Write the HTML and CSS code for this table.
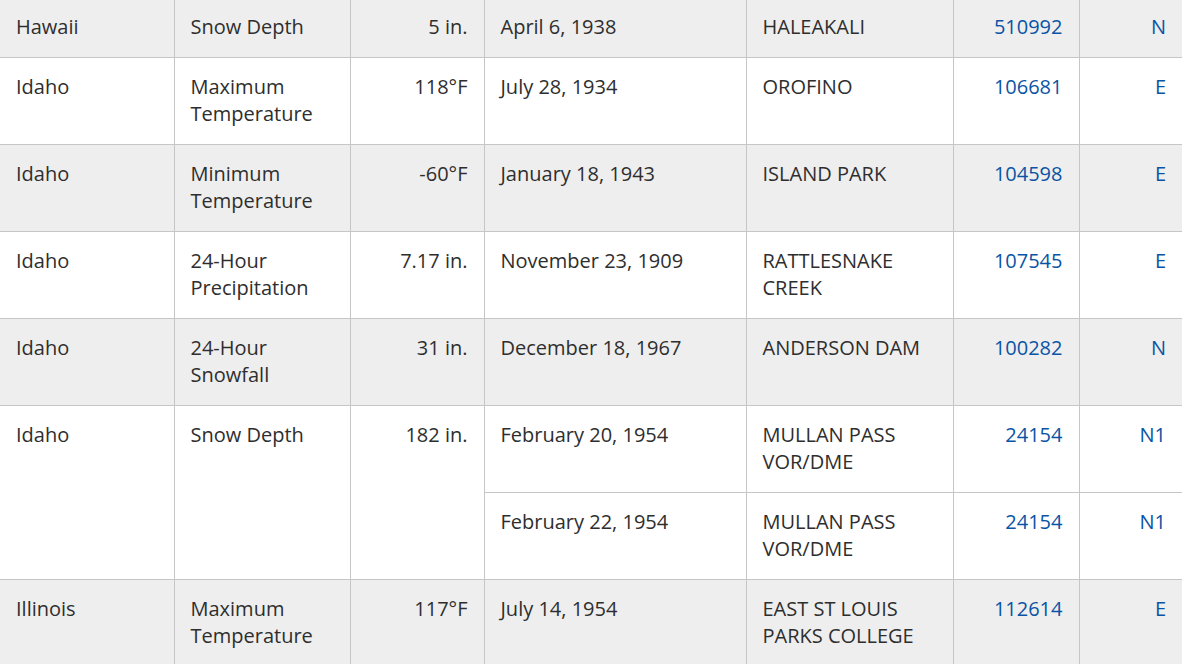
FILE: index.html
```html
<!DOCTYPE html>
<html>
<head>
<meta charset="utf-8">
<link rel="stylesheet" href="styles.css">
</head>
<body>
<div class="wrap">
<table class="records">
  <colgroup>
    <col class="c-state"><col class="c-elem"><col class="c-val"><col class="c-date"><col class="c-stn"><col class="c-id"><col class="c-flag">
  </colgroup>
  <tbody>
    <tr class="alt">
      <td>Hawaii</td><td>Snow Depth</td><td class="num">5 in.</td><td>April 6, 1938</td><td>HALEAKALI</td><td class="num"><a href="#">510992</a></td><td class="num"><a href="#">N</a></td>
    </tr>
    <tr>
      <td>Idaho</td><td>Maximum Temperature</td><td class="num">118°F</td><td>July 28, 1934</td><td>OROFINO</td><td class="num"><a href="#">106681</a></td><td class="num"><a href="#">E</a></td>
    </tr>
    <tr class="alt">
      <td>Idaho</td><td>Minimum Temperature</td><td class="num">-60°F</td><td>January 18, 1943</td><td>ISLAND PARK</td><td class="num"><a href="#">104598</a></td><td class="num"><a href="#">E</a></td>
    </tr>
    <tr>
      <td>Idaho</td><td>24-Hour Precipitation</td><td class="num">7.17 in.</td><td>November 23, 1909</td><td>RATTLESNAKE CREEK</td><td class="num"><a href="#">107545</a></td><td class="num"><a href="#">E</a></td>
    </tr>
    <tr class="alt">
      <td>Idaho</td><td>24-Hour Snowfall</td><td class="num">31 in.</td><td>December 18, 1967</td><td>ANDERSON DAM</td><td class="num"><a href="#">100282</a></td><td class="num"><a href="#">N</a></td>
    </tr>
    <tr>
      <td rowspan="2">Idaho</td><td rowspan="2">Snow Depth</td><td rowspan="2" class="num">182 in.</td><td>February 20, 1954</td><td>MULLAN PASS VOR/DME</td><td class="num"><a href="#">24154</a></td><td class="num"><a href="#">N1</a></td>
    </tr>
    <tr>
      <td>February 22, 1954</td><td>MULLAN PASS VOR/DME</td><td class="num"><a href="#">24154</a></td><td class="num"><a href="#">N1</a></td>
    </tr>
    <tr class="alt">
      <td>Illinois</td><td>Maximum Temperature</td><td class="num">117°F</td><td>July 14, 1954</td><td>EAST ST LOUIS PARKS COLLEGE</td><td class="num"><a href="#">112614</a></td><td class="num"><a href="#">E</a></td>
    </tr>
  </tbody>
</table>
</div>
</body>
</html>
```
FILE: styles.css
```css
html, body {
  margin: 0;
  padding: 0;
  background: #fff;
  overflow: hidden;
}
.wrap {
  width: 1182px;
  margin-top: -3px;
}
.records {
  width: 1182px;
  table-layout: fixed;
  border-collapse: collapse;
  font-family: "Open Sans", "Liberation Sans", sans-serif;
  font-size: 20px;
  line-height: 27px;
  color: #2e2e2e;
}
.c-state { width: 174px; }
.c-elem { width: 176px; }
.c-val { width: 134px; }
.c-date { width: 262px; }
.c-stn { width: 207px; }
.c-id { width: 126px; }
.c-flag { width: 103px; }
.records td {
  vertical-align: top;
  text-align: left;
  padding: 15px 16px 17px 16px;
  border: 1px solid #c6c6c6;
}
.records tr td:first-child { border-left: none; }
.records tr td:last-child { border-right: none; }
.records tr.alt td { background: #eeeeee; }
.records td.num { text-align: right; }
.records a {
  color: #0a54a5;
  text-decoration: none;
}
```
